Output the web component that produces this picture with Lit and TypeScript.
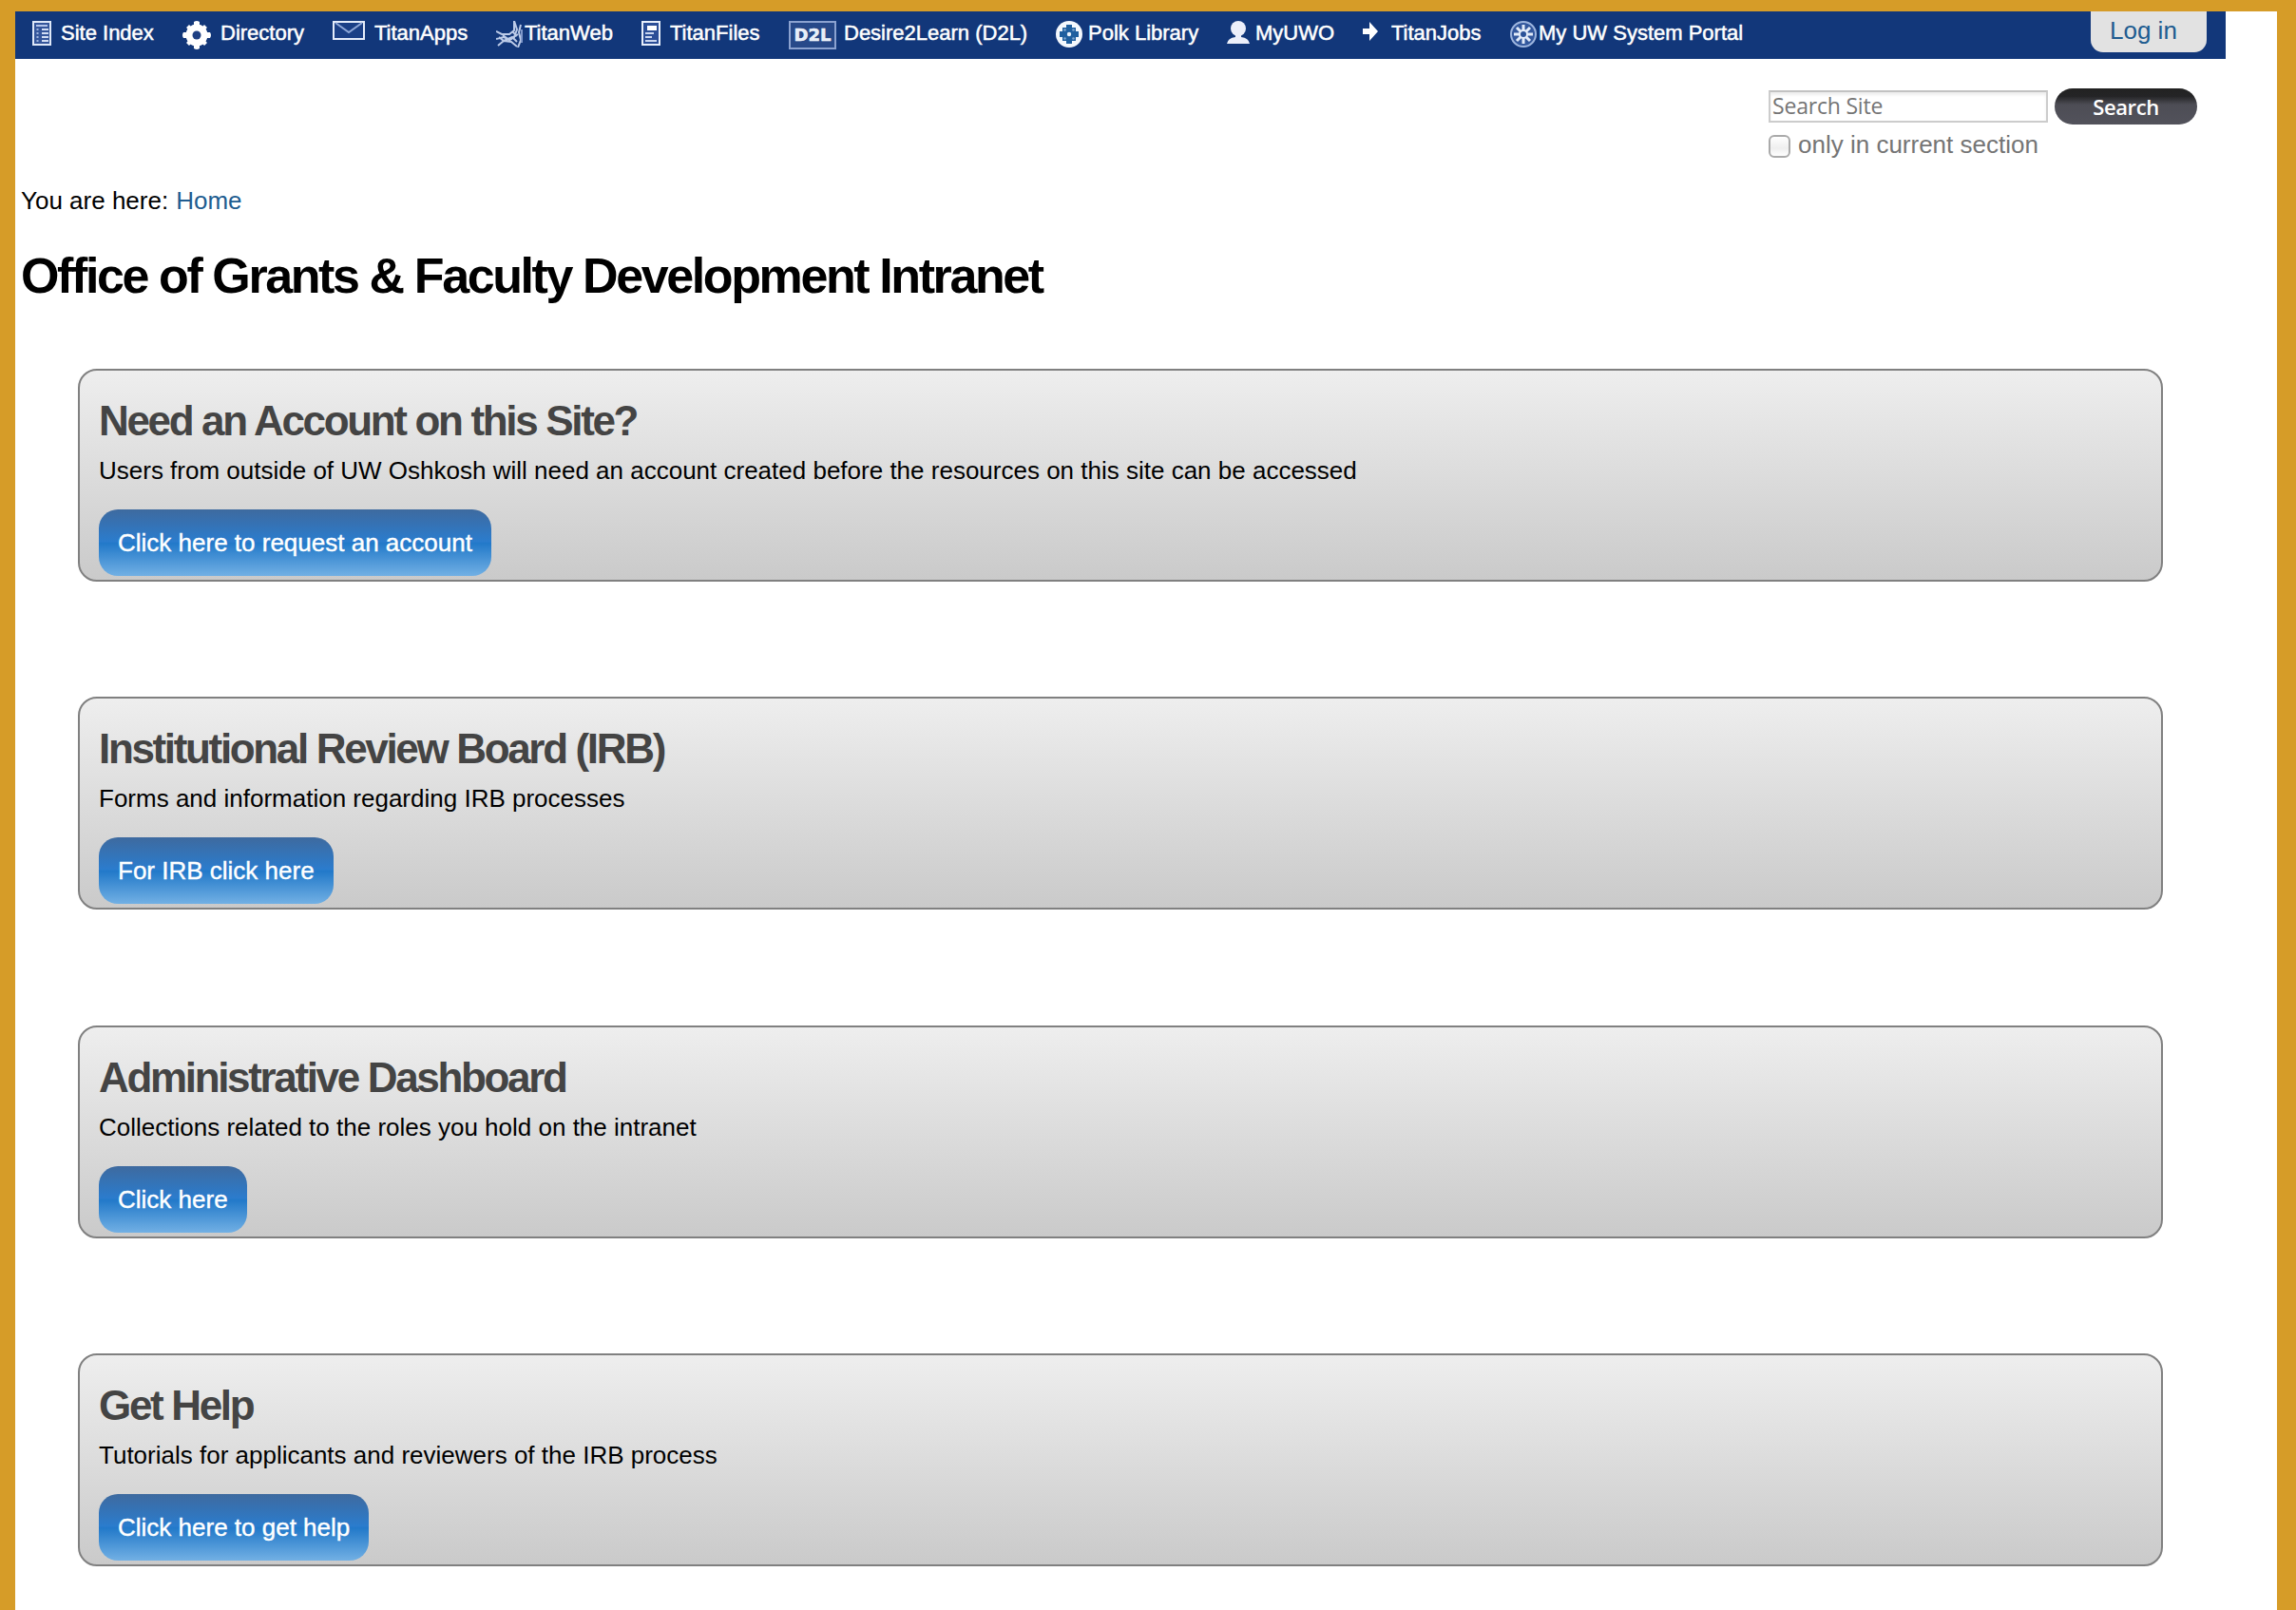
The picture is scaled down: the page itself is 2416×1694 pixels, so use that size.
import { LitElement, html, css, svg, nothing } from "lit";
import { customElement } from "lit/decorators.js";

const icons: Record<string, any> = {
  index: svg`<svg width="20" height="26" viewBox="0 0 20 26"><rect x="1" y="1" width="18" height="24" fill="#35569b" stroke="#dfe8f8" stroke-width="2"/><path d="M4 5h12" stroke="#b4c5ea" stroke-width="2"/><path d="M5.500 8v15" stroke="#9db3de" stroke-width="2" stroke-dasharray="2 2"/><path d="M10 9h7M10 13h7M10 17h7M10 21h7" stroke="#d3def4" stroke-width="2"/></svg>`,
  gear: svg`<svg width="30" height="30" viewBox="0 0 30 30"><g fill="#fff"><circle cx="15" cy="15" r="11.500"/><path d="M12 1q3-2 6 0v28q-3 2-6 0z"/><path d="M1 12q-2 3 0 6h28q2-3 0-6z"/><path d="M4 7l3-3 19 19-3 3zM23 4l3 3L7 26l-3-3z"/></g><circle cx="15" cy="15" r="4.500" fill="#1d3f83"/></svg>`,
  mail: svg`<svg width="34" height="20" viewBox="0 0 34 20"><rect x="1" y="1" width="32" height="18" fill="#1a3f86" stroke="#e4ecfa" stroke-width="2"/><path d="M3 2l14 10L31 2" fill="none" stroke="#8fa8d8" stroke-width="2"/></svg>`,
  titan: svg`<svg width="28" height="28" viewBox="0 0 28 28" fill="none" stroke="#bccbe8" stroke-width="2"><path d="M0 11l6 3 8 0 5-4V0l3 9-3 8-6 4"/><path d="M26 4l-2 8 2 8-3 8"/><path d="M0 19l8-2 7 3M2 26l6-5 8 1 6 5M7 15l7 5 9-6M3 17l5 4 9-4 5 5M17 11l5 5"/><path d="M27 9v14" stroke="#7e97ca"/></svg>`,
  files: svg`<svg width="20" height="26" viewBox="0 0 20 26"><rect x="1" y="1" width="18" height="24" fill="#2b4e97" stroke="#e8effb" stroke-width="2"/><path d="M6 5h10v5H6z" fill="#fff"/><path d="M4 13h9M4 17h7M4 21h12" stroke="#c9d6f0" stroke-width="2"/></svg>`,
  library: svg`<svg width="28" height="28" viewBox="0 0 28 28"><circle cx="14" cy="14" r="14" fill="#f4f8fd"/><path d="M11 4h6v3h4v4h3v6h-3v4h-4v3h-6v-3H7v-4H4v-6h3V7h4z" fill="#1f5f9f"/><circle cx="9.500" cy="9.500" r="1.300" fill="#7fa6cf"/><circle cx="18.500" cy="9.500" r="1.300" fill="#7fa6cf"/><circle cx="9.500" cy="18.500" r="1.300" fill="#7fa6cf"/><circle cx="18.500" cy="18.500" r="1.300" fill="#7fa6cf"/><circle cx="14" cy="14" r="2.200" fill="#eaf2fb"/></svg>`,
  user: svg`<svg width="24" height="24" viewBox="0 0 24 24" fill="#eceffa"><ellipse cx="12" cy="8" rx="8" ry="8"/><path d="M9 14h6v3q8 1 9 7H0q1-6 9-7z"/></svg>`,
  arrow: svg`<svg width="16" height="22" viewBox="0 0 16 22" fill="#fff"><path d="M0 8h7V1l9 10-9 10v-7H0z"/></svg>`,
  portal: svg`<svg width="28" height="28" viewBox="0 0 28 28" fill="none"><circle cx="14" cy="14" r="13" fill="#33589d" stroke="#9db5de" stroke-width="2"/><path d="M14 4v20M4 14h20M7 7l14 14M21 7L7 21" stroke="#e3ecf9" stroke-width="3"/><circle cx="14" cy="14" r="4" fill="#2a5298" stroke="#e3ecf9" stroke-width="2"/></svg>`,
};

const links = [
  ["index", "Site Index", 34, 64], ["gear", "Directory", 192, 232], ["mail", "TitanApps", 350, 394],
  ["titan", "TitanWeb", 522, 552], ["files", "TitanFiles", 675, 705], ["d2l", "Desire2Learn (D2L)", 830, 888],
  ["library", "Polk Library", 1111, 1145], ["user", "MyUWO", 1291, 1321], ["arrow", "TitanJobs", 1434, 1464],
  ["portal", "My UW System Portal", 1589, 1619],
] as [string, string, number, number][];

const cards = [
  ["Need an Account on this Site?", "Users from outside of UW Oshkosh will need an account created before the resources on this site can be accessed", "Click here to request an account"],
  ["Institutional Review Board (IRB)", "Forms and information regarding IRB processes", "For IRB click here"],
  ["Administrative Dashboard", "Collections related to the roles you hold on the intranet", "Click here"],
  ["Get Help", "Tutorials for applicants and reviewers of the IRB process", "Click here to get help"],
];

@customElement("app-root")
export class AppRoot extends LitElement {
  static styles = css`
    :host { display: block; height: 1694px; box-sizing: border-box; overflow: hidden; background: #fff;
      border: solid #d69c28; border-width: 12px 20px 0 16px;
      font: 26px/38px "Liberation Sans", Arial, sans-serif; color: #000; }
    a { color: #205c90; text-decoration: none; }
    .bar { width: 2326px; height: 50px; background: #12377a; display: flex; justify-content: space-between; box-sizing: border-box; padding-right: 20px; }
    .links { display: flex; padding-left: 18px; }
    .item { display: flex; box-sizing: border-box; color: #fff; font-size: 22px; line-height: 45px; white-space: nowrap; -webkit-text-stroke: .5px #fff; }
    .icon { display: flex; flex: none; padding-top: 10px; }
    .d2l { box-sizing: border-box; width: 50px; height: 30px; border: 2px solid #8ba2d0; font: bold 18px/26px "DejaVu Sans", sans-serif; text-align: center; color: #e6edf9; background: #274989; }
    .login { width: 122px; height: 43px; box-sizing: border-box; background: #e2e2e2; border-radius: 0 0 13px 13px; padding-left: 20px; line-height: 41px; }
    .search { display: grid; grid-template-columns: 294px 150px; column-gap: 7px; width: 451px; margin: 31px 0 0 1845px; }
    .field { box-sizing: border-box; height: 34px; margin-top: 2px; border: 2px solid #ccc; border-top-color: #c2c2c2; box-shadow: inset 0 3px 3px #eee; font: 23px/29px "Open Sans", sans-serif; letter-spacing: -.2px; color: #757575; padding-left: 2px; }
    .go { height: 38px; border-radius: 19px; background: linear-gradient(#222 0, #242426 22%, #4d4d55 45%, #52525b 100%); color: #fff; text-align: center; font: 600 22px/38px "Open Sans", sans-serif; letter-spacing: -.4px; }
    .only { grid-column: 1 / 3; display: flex; color: #757575; line-height: 42px; gap: 8px; }
    .box { box-sizing: border-box; width: 23px; height: 24px; margin-top: 11px; border: 2px solid #aaa; border-radius: 6px; background: linear-gradient(#fff, #eee 60%, #fff); }
    .crumbs { padding: 19px 0 0 6px; display: flex; gap: 8px; }
    h1 { margin: 30px 0 0 6px; font-size: 52px; line-height: 60px; letter-spacing: -2.400px; white-space: nowrap; }
    .cards { display: flex; flex-direction: column; gap: 121.400px; margin: 68px 0 0 66px; width: 2194px; }
    .card { box-sizing: border-box; height: 224px; border: 2px solid #808080; border-radius: 20px; background: linear-gradient(#eee, #cacaca); padding: 28px 20px 0; display: flex; flex-direction: column; align-items: flex-start; white-space: nowrap; }
    h2 { margin: 0; font-size: 44px; line-height: 50px; letter-spacing: -2.340px; color: #444; }
    p { margin: 8px 0 22px; }
    .btn { height: 70px; line-height: 70px; padding: 0 20px; border-radius: 20px; color: #fff; background: linear-gradient(#3e6a9f 0, #2b7ccd 48%, #2279c9 51%, #72b0e4 100%); -webkit-text-stroke: .4px #fff; }
  `;

  render() {
    return html`
      <nav class="bar">
        <div class="links">
          ${links.map(([icon, label, x, tx], i) => html`
            <a class="item" style="width:${(links[i + 1]?.[2] ?? 1860) - x}px">
              <span class="icon" style="width:${tx - x}px">${icon === "d2l" ? html`<span class="d2l">D2L</span>` : icons[icon] ?? nothing}</span><span>${label}</span>
            </a>`)}
        </div>
        <a class="login">Log in</a>
      </nav>
      <div class="search">
        <div class="field">Search Site</div>
        <div class="go">Search</div>
        <label class="only"><span class="box"></span><span>only in current section</span></label>
      </div>
      <div class="crumbs"><span>You are here:</span><a>Home</a></div>
      <h1>Office of Grants &amp; Faculty Development Intranet</h1>
      <main class="cards">
        ${cards.map(([title, text, action]) => html`
          <section class="card"><h2>${title}</h2><p>${text}</p><a class="btn">${action}</a></section>`)}
      </main>`;
  }
}
